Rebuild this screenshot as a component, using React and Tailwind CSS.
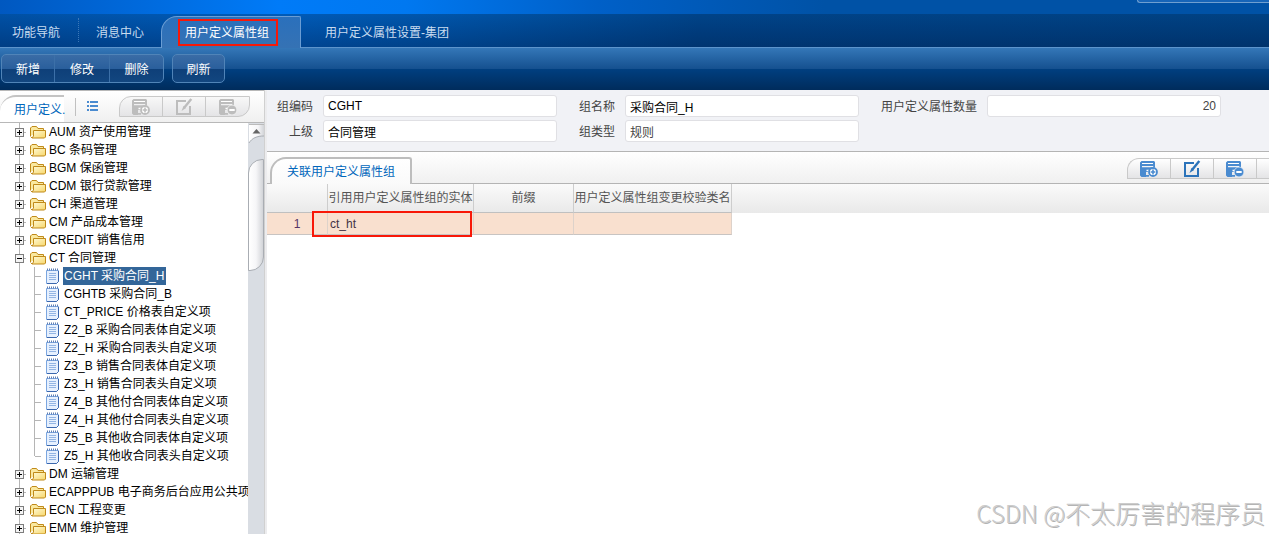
const FONT = "font-['Liberation_Sans','Noto_Sans_CJK_SC',sans-serif]";

const TREE = [
  { label: 'AUM 资产使用管理' },
  { label: 'BC 条码管理' },
  { label: 'BGM 保函管理' },
  { label: 'CDM 银行贷款管理' },
  { label: 'CH 渠道管理' },
  { label: 'CM 产品成本管理' },
  { label: 'CREDIT 销售信用' },
  {
    label: 'CT 合同管理',
    children: [
      'CGHT 采购合同_H',
      'CGHTB 采购合同_B',
      'CT_PRICE 价格表自定义项',
      'Z2_B 采购合同表体自定义项',
      'Z2_H 采购合同表头自定义项',
      'Z3_B 销售合同表体自定义项',
      'Z3_H 销售合同表头自定义项',
      'Z4_B 其他付合同表体自定义项',
      'Z4_H 其他付合同表头自定义项',
      'Z5_B 其他收合同表体自定义项',
      'Z5_H 其他收合同表头自定义项',
    ],
  },
  { label: 'DM 运输管理' },
  { label: 'ECAPPPUB 电子商务后台应用公共项' },
  { label: 'ECN 工程变更' },
  { label: 'EMM 维护管理' },
];

function SheetShape() {
  return (
    <>
      <path d="M1.500 0H14l1 1v5.500h-1.800V5H2v1.200h11L8 9.500V11H6v5H1.500L0 14.500v-13z" fill="currentColor" />
      <path d="M2 2.500h11" stroke="white" strokeWidth="1.200" />
      <path d="M6.500 9.500H14" stroke="white" strokeWidth="1.400" />
      <path d="M6 14.800h3" stroke="currentColor" strokeWidth="1.800" />
    </>
  );
}

function AddIcon() {
  return (
    <svg width="18" height="16" viewBox="0 0 18 16" fill="none" aria-hidden="true">
      <SheetShape />
      <circle cx="13" cy="11" r="4" fill="white" stroke="currentColor" strokeWidth="1.800" />
      <path d="M13 8.600v4.800M10.600 11h4.800" stroke="currentColor" strokeWidth="1.600" />
    </svg>
  );
}

function RemoveIcon() {
  return (
    <svg width="18" height="16" viewBox="0 0 18 16" fill="none" aria-hidden="true">
      <SheetShape />
      <circle cx="13" cy="11" r="4.900" fill="currentColor" stroke="white" strokeWidth="0.600" />
      <path d="M10.300 11h5.400" stroke="white" strokeWidth="1.800" />
    </svg>
  );
}

function EditIcon() {
  return (
    <svg width="18" height="18" viewBox="0 0 18 18" fill="none" aria-hidden="true">
      <path d="M11 3H2v13h13V8" stroke="currentColor" strokeWidth="2" />
      <path d="M16.300 1L9 10" stroke="currentColor" strokeWidth="2.400" />
      <path d="M8.500 8L6.500 13l4.500-3z" fill="currentColor" />
    </svg>
  );
}

function ListIcon() {
  return (
    <svg width="11" height="11" viewBox="0 0 11 11" fill="#4a8bd0" aria-hidden="true">
      <path d="M0 0h2v2H0zM3 0h8v2H3zM0 4h2v2H0zM3 4h8v2H3zM0 8h2v2H0zM3 8h8v2H3z" />
    </svg>
  );
}

function FolderIcon() {
  return (
    <svg className="shrink-0" width="16" height="14" viewBox="0 0 16 14" aria-hidden="true">
      <defs>
        <linearGradient id="folderFill" x1="0" y1="0" x2="1" y2="1">
          <stop offset="0" stopColor="#fffbd8" />
          <stop offset="1" stopColor="#f7d66a" />
        </linearGradient>
      </defs>
      <path d="M.5 11V3L2 1.500h4.500L8 3.500h5.500V5" fill="#fae9a0" stroke="#c08a1a" />
      <path d="M.5 11.500l1.500 1.500M.5 10V4" stroke="#c08a1a" />
      <path d="M3.500 5.500h12v6.500l-1 1H2L3.500 11z" fill="url(#folderFill)" stroke="#c08a1a" />
    </svg>
  );
}

function DocIcon() {
  return (
    <svg className="shrink-0" width="13" height="16" viewBox="0 0 13 16" aria-hidden="true">
      <path d="M.5 2.500h12v11l-2 2H.5z" fill="#e6f0fe" stroke="#7ba6e0" />
      <path d="M12.500 3v10.500l-2 2H1" fill="none" stroke="#3a67ae" />
      <path d="M1 1.500h11" stroke="#5f7fb4" strokeWidth="2" strokeDasharray="1 1" />
      <path d="M3 5.500h7M3 7.500h7M3 9.500h7M3 11.500h7" stroke="#93b5e4" />
    </svg>
  );
}

function Expander({ open }) {
  return (
    <svg className="shrink-0" width="9" height="9" viewBox="0 0 9 9" shapeRendering="crispEdges" aria-hidden="true">
      <rect x=".5" y=".5" width="8" height="8" fill="#f4f4f4" stroke="#7d7d7d" />
      <path d={open ? 'M2 4.500h5' : 'M2 4.500h5M4.500 2v5'} stroke="#000" />
    </svg>
  );
}

function Tree() {
  return (
    <ul className="min-w-0 flex-1 overflow-hidden text-black">
      {TREE.map((node) => (
        <li key={node.label} className="bg-[linear-gradient(#b5b5b5,#b5b5b5)] bg-[length:1px_100%] bg-[position:19px_0] bg-no-repeat">
          <div className="flex h-[18px] items-center pl-[15px]">
            <Expander open={Boolean(node.children)} />
            <span className="mr-1 h-px w-[2px] shrink-0 bg-[#b5b5b5]" />
            <FolderIcon />
            <span className="ml-[3px] shrink-0 whitespace-nowrap leading-[18px]">{node.label}</span>
          </div>
          {node.children && (
            <ul>
              {node.children.map((child, i) => (
                <li key={child} className="flex h-[18px] items-center pl-[34px]">
                  <span className="flex h-full w-px flex-col">
                    <span className={i === node.children.length - 1 ? 'h-[9px] bg-[#b5b5b5]' : 'h-full bg-[#b5b5b5]'} />
                  </span>
                  <span className="mr-[5px] h-px w-[6px] bg-[#b5b5b5]" />
                  <DocIcon />
                  <span className={`ml-1 h-[18px] whitespace-nowrap pr-[2px] pl-px leading-[18px] ${i === 0 ? 'bg-[#336699] text-white' : ''}`}>
                    {child}
                  </span>
                </li>
              ))}
            </ul>
          )}
        </li>
      ))}
    </ul>
  );
}

function Scrollbar() {
  return (
    <div className="flex w-4 shrink-0 flex-col bg-[#d9dde3]">
      <svg width="16" height="36" viewBox="0 0 16 36" aria-hidden="true">
        <defs>
          <linearGradient id="barFill">
            <stop offset="0" stopColor="#ffffff" />
            <stop offset=".6" stopColor="#f6f6f8" />
            <stop offset="1" stopColor="#d2d4d8" />
          </linearGradient>
        </defs>
        <path d="M1 1h15v12C9 13 4 15 1 20z" fill="url(#barFill)" />
        <path d="M1 20C4 15 9 13 16 13" fill="none" stroke="#a9adb3" />
        <path d="M1 1.500h15" stroke="#bbb" />
        <path d="M4.500 10.500L8.500 6l4 4.500z" fill="#666" />
      </svg>
      <div className="h-[112px] rounded-tl-[14px] rounded-br-[14px] border border-[#a9adb3] bg-linear-to-r from-white via-[#f6f6f8] to-[#d2d4d8]" />
    </div>
  );
}

function SidePanel() {
  const item = 'flex w-[43px] items-center justify-center border-r border-[#c9c9c9] last:border-r-0';
  return (
    <aside className="flex w-[265px] shrink-0 flex-col border-r border-[#d0d0d0] bg-white">
      <div className="flex h-[33px] shrink-0 items-center border-t border-b border-[#b8b8b8] bg-linear-to-b from-white to-[#f0f0f0]">
        <div className="mt-1 h-[27px] w-16 shrink-0 whitespace-nowrap rounded-tl-[16px] border-t-2 border-[#c4c4c4] bg-white pl-[14px] leading-[26px] text-[#0066bb]">
          用户定义.
        </div>
        <span className="ml-[11px] h-[18px] w-px bg-[#c0c0c0]" />
        <button type="button" aria-label="列表" className="ml-[11px]">
          <ListIcon />
        </button>
        <div className="ml-[21px] flex h-[21px] overflow-hidden rounded-tl-[12px] rounded-br-[12px] border border-[#c9c9c9] bg-linear-to-b from-[#f8f8f8] to-[#e4e4e6] text-[#bdbdbd]">
          <button type="button" aria-label="新增" disabled className={item}><AddIcon /></button>
          <button type="button" aria-label="修改" disabled className={item}><EditIcon /></button>
          <button type="button" aria-label="删除" disabled className={item}><RemoveIcon /></button>
        </div>
      </div>
      <div className="flex min-h-0 flex-1 overflow-hidden">
        <Tree />
        <Scrollbar />
      </div>
    </aside>
  );
}

function Field({ id, label, value, labelClass, inputClass = 'text-black' }) {
  return (
    <div className="flex items-center">
      <label htmlFor={id} className={`mr-[10px] pt-[2px] text-right text-[#444] ${labelClass}`}>{label}</label>
      <input
        id={id}
        defaultValue={value}
        readOnly
        className={`h-[22px] w-[234px] rounded-[3px] border border-[#e0e0e4] bg-white px-1 outline-none ${inputClass}`}
      />
    </div>
  );
}

function DetailForm() {
  return (
    <form className="flex h-[62px] shrink-0 flex-col gap-[3px] border-b border-[#b4b4b4] bg-[#f1f2f6] pt-[5px]">
      <div className="flex">
        <Field id="code" label="组编码" value="CGHT" labelClass="w-[46px]" />
        <Field id="name" label="组名称" value="采购合同_H" labelClass="w-[58px]" />
        <Field id="count" label="用户定义属性数量" value="20" labelClass="w-[118px]" inputClass="text-right text-[#444]" />
      </div>
      <div className="flex">
        <Field id="parent" label="上级" value="合同管理" labelClass="w-[46px]" />
        <Field id="type" label="组类型" value="规则" labelClass="w-[58px]" inputClass="text-[#444]" />
      </div>
    </form>
  );
}

function DetailTable() {
  const head = 'border-r border-b border-r-[#cdcdcd] border-b-[#c0c0c0] p-0 text-center font-normal whitespace-nowrap';
  const cell = 'border-r border-b border-r-[#ddd2ca] border-b-[#c8c4c2] p-0';
  return (
    <div className="bg-[linear-gradient(#fafafa,#e9e9e9)] bg-[length:100%_29px] bg-no-repeat">
      <table className="w-[465px] table-fixed border-separate border-spacing-0 text-[#555]">
        <colgroup>
          <col className="w-[61px]" />
          <col className="w-[146px]" />
          <col className="w-[100px]" />
          <col className="w-[158px]" />
        </colgroup>
        <thead>
          <tr className="h-[29px]">
            <th className={head} aria-label="行号" />
            <th className={head}>引用用户定义属性组的实体</th>
            <th className={head}>前缀</th>
            <th className={head}>用户定义属性组变更校验类名</th>
          </tr>
        </thead>
        <tbody>
          <tr className="h-[22px] bg-[#f9e0cf] text-[#443344]">
            <td className={`${cell} text-center text-[#553366]`}>1</td>
            <td className={`${cell} relative pl-[2px]`}>
              ct_ht
              <span className="pointer-events-none absolute -top-[2px] -bottom-[3px] -left-4 right-px border-2 border-[#f81808]" />
            </td>
            <td className={cell} />
            <td className={cell} />
          </tr>
        </tbody>
      </table>
    </div>
  );
}

function MainPanel() {
  const item = 'flex w-[43px] items-center justify-center border-r border-[#c9c9c9]';
  return (
    <main className="flex min-w-0 flex-1 flex-col bg-white">
      <DetailForm />
      <div className="flex h-8 shrink-0 items-stretch justify-between border-b border-[#b4b4b4] bg-linear-to-b from-white to-[#f0f0f0]">
        <button type="button" className="-mb-px ml-[3px] mt-[5px] w-[142px] rounded-tl-[16px] rounded-tr-[3px] border-2 border-b-0 border-[#bdbdbd] bg-linear-to-b from-white to-[#fafafa] text-[#0066bb]">
          关联用户定义属性组
        </button>
        <div className="mt-[6px] flex h-[21px] overflow-hidden rounded-tl-[12px] border border-r-0 border-[#c9c9c9] bg-linear-to-b from-white to-[#e4e4e6] text-[#4a8bd0]">
          <button type="button" aria-label="增行" className={item}><AddIcon /></button>
          <button type="button" aria-label="修改行" className={`${item} text-[#2b73ba]`}><EditIcon /></button>
          <button type="button" aria-label="删行" className={item}><RemoveIcon /></button>
          <span className="w-3" />
        </div>
      </div>
      <DetailTable />
    </main>
  );
}

function Header() {
  const group = 'flex h-[29px] overflow-hidden rounded-[5px] border border-[#5084b8] bg-[linear-gradient(#3a6ca6_0%,#2a5f9c_50%,#0e3f78_50%,#124680_100%)] text-white';
  return (
    <header className="shrink-0">
      <div className="flex h-[14px] justify-end overflow-hidden bg-[linear-gradient(90deg,#0058c0_0%,#007bf8_22%,#0078f0_32%,#0060c8_47%,#0052a6_65%,#0052a6_100%)]">
        <div className="h-[3px] w-[132px] rounded-bl-[10px] border-b border-l border-[#6f9fd0] bg-[#1765b8]" />
      </div>
      <nav className="flex h-[34px] items-end border-b border-[#5d94cc] bg-[linear-gradient(rgba(0,0,0,0.04),rgba(0,15,50,0.32)),linear-gradient(90deg,#0054ac_0%,#005fc0_22%,#0058b0_35%,#00468e_55%,#004488_100%)] text-[#c9dcf0]">
        <a href="#nav" className="w-[78px] pl-3 leading-[28px]">功能导航</a>
        <span className="mb-[5px] h-6 border-l border-dotted border-[#3c78b8]" />
        <a href="#messages" className="w-[82px] pl-[17px] leading-[28px]">消息中心</a>
        <a href="#group" className="-mb-px h-8 w-[140px] rounded-tl-[16px] rounded-tr-[2px] border border-b-0 border-[#6a9dd4] bg-linear-to-b from-[#2a70bc] to-[#3572b4] pl-4 pt-[2px] text-white">
          <span className="block h-[27px] w-[100px] border-2 border-[#f81808] pl-[5px] leading-[25px]">用户定义属性组</span>
        </a>
        <a href="#settings" className="pl-6 leading-[28px]">用户定义属性设置-集团</a>
      </nav>
      <div className="flex h-[42px] items-start gap-2 bg-[linear-gradient(#3477b8_0%,#15508f_50%,#003f80_50%,#002c5c_100%)] pl-px pt-[6px]">
        <div className={group}>
          <button type="button" className="w-[53px] border-r border-[#3c70a8] pt-[2px]">新增</button>
          <button type="button" className="w-[55px] border-r border-[#3c70a8] pt-[2px]">修改</button>
          <button type="button" className="w-[53px] pt-[2px]">删除</button>
        </div>
        <div className={group}>
          <button type="button" className="w-[51px] pt-[2px]">刷新</button>
        </div>
      </div>
    </header>
  );
}

export default function App() {
  return (
    <div className={`relative flex h-screen flex-col overflow-hidden bg-white text-xs ${FONT}`}>
      <Header />
      <div className="flex min-h-0 flex-1">
        <SidePanel />
        <div className="w-[2px] shrink-0 bg-[#ececee]" />
        <MainPanel />
      </div>
      <div className="pointer-events-none absolute right-1 bottom-1 whitespace-nowrap font-['Noto_Sans_CJK_SC',sans-serif] text-[25px] font-light leading-[34px] text-[#cccccc] [text-shadow:1px_1px_0_#b4b4b4]">
        <span className="text-2xl leading-[34px]">CSDN @</span>不太厉害的程序员
      </div>
    </div>
  );
}
